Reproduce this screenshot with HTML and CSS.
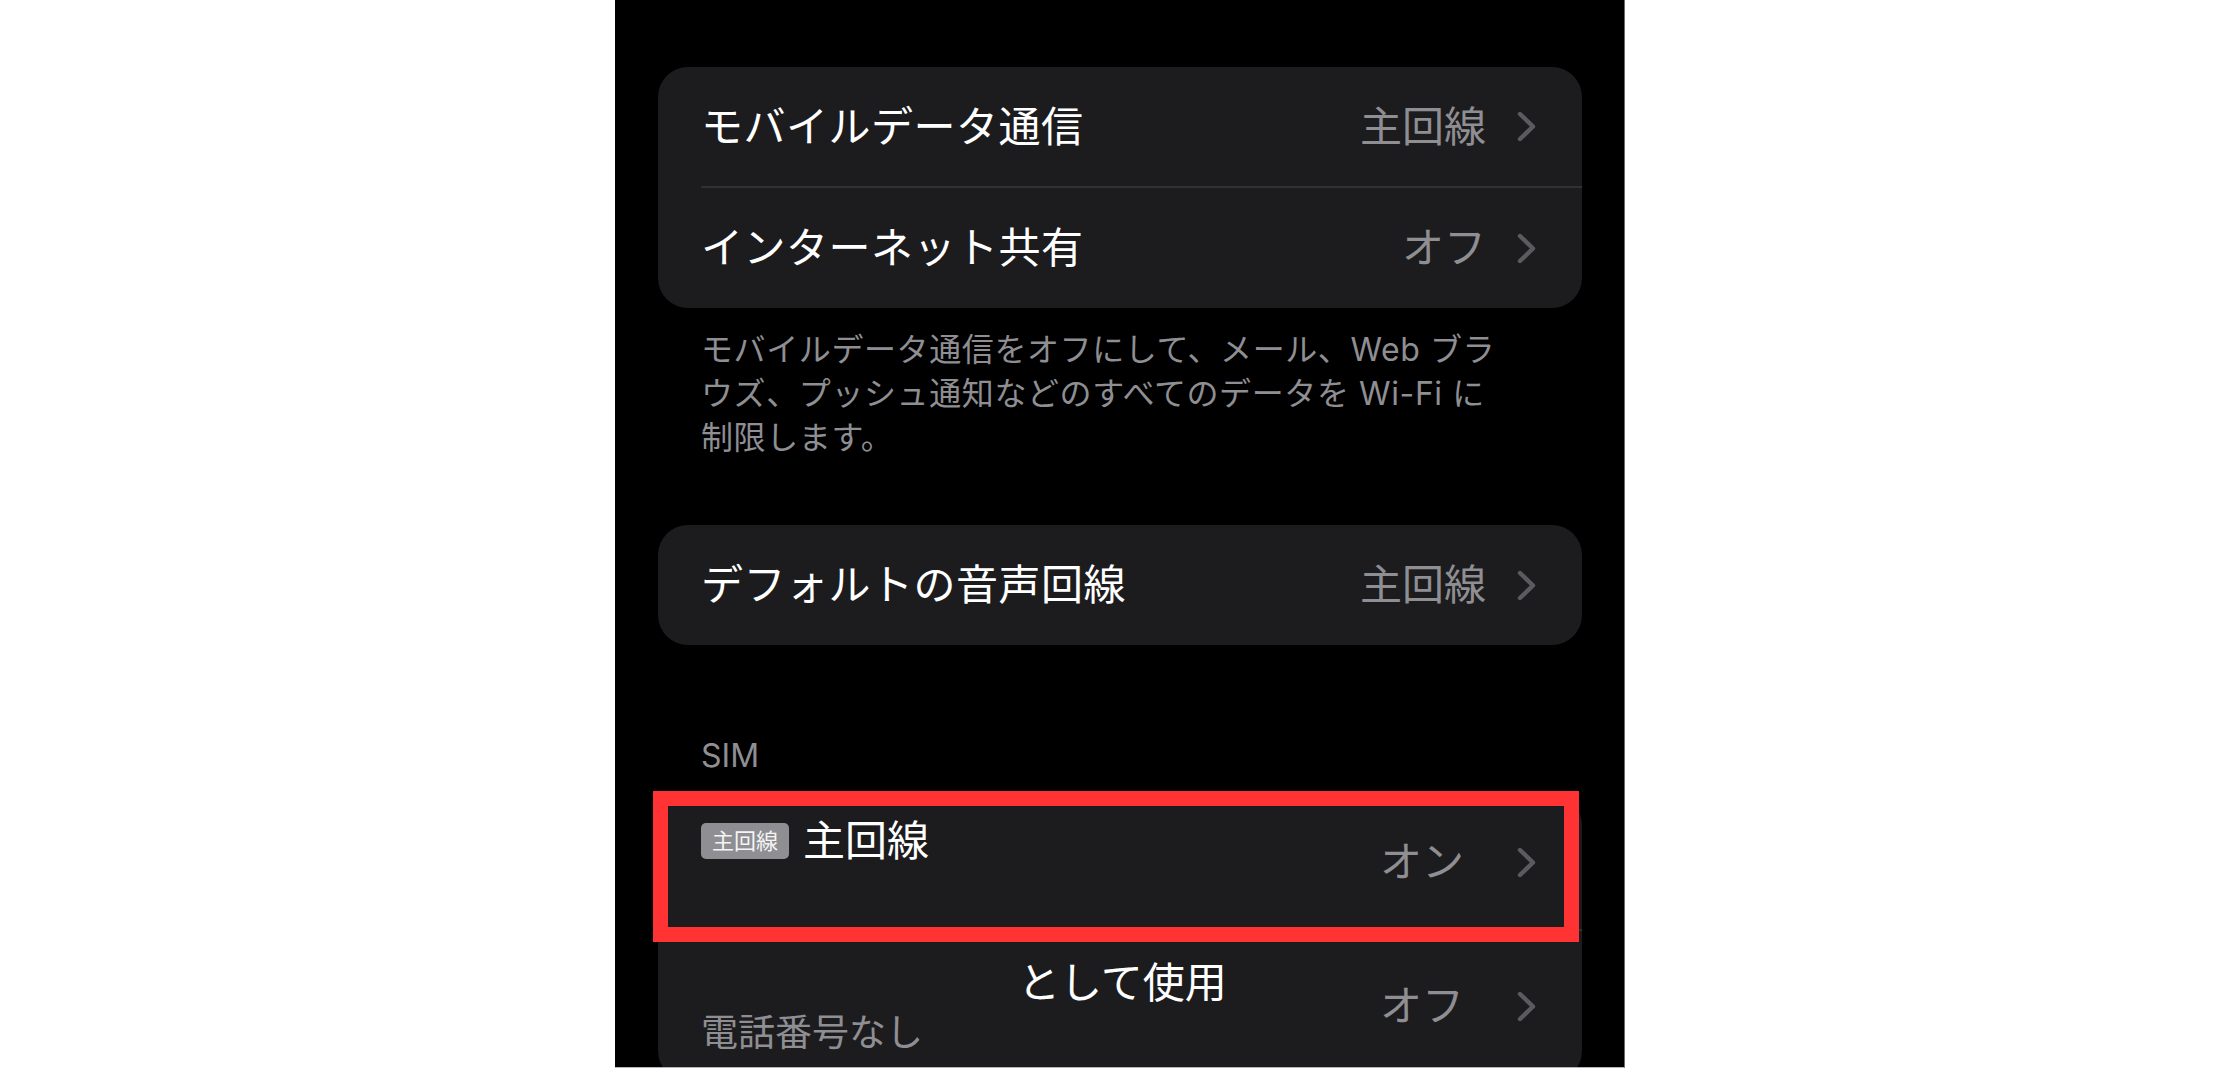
FILE: index.html
```html
<!DOCTYPE html>
<html lang="ja">
<head>
<meta charset="utf-8">
<title>モバイル通信</title>
<link rel="stylesheet" href="styles.css">
</head>
<body>
<div class="phone">
  <div class="card">
    <div class="row row-a">
      <div class="row-body sep">
        <span class="label">モバイルデータ通信</span>
        <span class="value">主回線</span>
        <svg class="chev" viewBox="0 0 19 31"><path d="M3 3 L16 15.5 L3 28"/></svg>
      </div>
    </div>
    <div class="row row-b">
      <div class="row-body">
        <span class="label">インターネット共有</span>
        <span class="value">オフ</span>
        <svg class="chev" viewBox="0 0 19 31"><path d="M3 3 L16 15.5 L3 28"/></svg>
      </div>
    </div>
  </div>

  <p class="footer">モバイルデータ通信をオフにして、メール、Web ブラ<br>ウズ、プッシュ通知などのすべてのデータを Wi-Fi に<br>制限します。</p>

  <div class="card card-voice">
    <div class="row row-b">
      <div class="row-body">
        <span class="label">デフォルトの音声回線</span>
        <span class="value">主回線</span>
        <svg class="chev" viewBox="0 0 19 31"><path d="M3 3 L16 15.5 L3 28"/></svg>
      </div>
    </div>
  </div>

  <div class="section-header">SIM</div>

  <div class="card sim-card">
    <div class="row sim-row1">
      <div class="row-body sep">
        <div class="sim-left">
          <span class="badge">主回線</span>
          <span class="label-inline">主回線</span>
        </div>
        <span class="value sim-value">オン</span>
        <svg class="chev" viewBox="0 0 19 31"><path d="M3 3 L16 15.5 L3 28"/></svg>
      </div>
    </div>
    <div class="row sim-row2">
      <div class="row-body">
        <div class="sim-left2">
          <div class="title2">として使用</div>
          <div class="subtitle">電話番号なし</div>
        </div>
        <span class="value sim-value">オフ</span>
        <svg class="chev" viewBox="0 0 19 31"><path d="M3 3 L16 15.5 L3 28"/></svg>
      </div>
    </div>
    <div class="highlight"></div>
  </div>
</div>
</body>
</html>
```
FILE: styles.css
```css
html, body {
  margin: 0;
  background: #ffffff;
}

body {
  font-family: "Inter", "Noto Sans CJK JP", sans-serif;
  height: 1070px;
  overflow: hidden;
}

.phone {
  margin-left: 615px;
  width: 1010px;
  height: 1068px;
  box-sizing: border-box;
  padding: 67px 42px 0 43px;
  background: #000000;
  border-right: 1px solid #6a6a6a;
  border-bottom: 1px solid #b5b5b5;
  overflow: hidden;
}

.card {
  background: #1c1c1e;
  border-radius: 30px;
}

.row {
  display: flex;
  padding-left: 43px;
  box-sizing: border-box;
}

.row-a { height: 121px; }
.row-b { height: 120px; }

.row-body {
  flex: 1;
  display: flex;
  align-items: center;
  padding-right: 46px;
  min-width: 0;
}

.row-body.sep {
  border-bottom: 2px solid #313134;
}

.label {
  flex: 1;
  color: #ffffff;
  font-size: 42px;
  line-height: 50px;
  letter-spacing: 0.5px;
  white-space: nowrap;
}

.value {
  color: #8e8e93;
  font-size: 42px;
  line-height: 50px;
  margin-right: 31px;
  white-space: nowrap;
}

.chev {
  width: 19px;
  height: 31px;
  display: block;
  flex: none;
}

.chev path {
  fill: none;
  stroke: #5b5b5f;
  stroke-width: 4.4;
  stroke-linecap: round;
  stroke-linejoin: round;
}

.footer {
  margin: 20px 0 0;
  padding-left: 43px;
  font-size: 32px;
  line-height: 44px;
  letter-spacing: 0.6px;
  color: #8e8e93;
  white-space: nowrap;
}

.card-voice {
  margin-top: 65px;
}

.section-header {
  margin-top: 89px;
  padding-left: 43px;
  font-size: 32px;
  line-height: 44px;
  color: #8e8e93;
}

.sim-card {
  position: relative;
  margin-top: 17px;
}

.sim-row1 { height: 136px; }
.sim-row2 { height: 150px; }

.sim-left {
  flex: 1;
  align-self: flex-start;
  display: flex;
  align-items: center;
  padding-top: 21px;
  height: 50px;
}

.badge {
  background: #8e8e93;
  color: #f4f4f4;
  font-size: 22px;
  line-height: 36px;
  padding: 0 11px;
  border-radius: 5px;
  margin-right: 14px;
}

.label-inline {
  color: #ffffff;
  font-size: 42px;
  line-height: 50px;
}

.sim-value {
  margin-right: 53px;
}

.sim-left2 {
  flex: 1;
  align-self: flex-start;
  padding-top: 27px;
}

.title2 {
  margin-left: 317px;
  color: #ffffff;
  font-size: 42px;
  line-height: 50px;
}

.subtitle {
  color: #8e8e93;
  font-size: 37px;
  line-height: 50px;
}

.highlight {
  position: absolute;
  left: -5px;
  top: -4px;
  width: 926px;
  height: 151px;
  box-sizing: border-box;
  border: 15px solid #ff3333;
}
```
